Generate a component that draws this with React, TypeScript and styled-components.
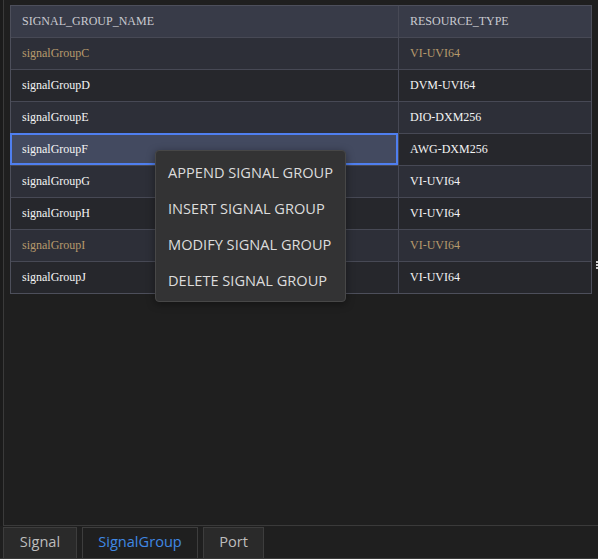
import React from "react";
import styled, { createGlobalStyle } from "styled-components";

const Global = createGlobalStyle`
  html, body { margin: 0; padding: 0; background: #1b1b1b; }
  body { width: 598px; height: 559px; overflow: hidden; }
  #root { width: 598px; height: 559px; }
`;

const Frame = styled.div`
  position: relative;
  width: 598px;
  height: 559px;
  display: flex;
  flex-direction: column;
  background: #1b1b1b;
`;

const Panel = styled.div`
  flex: 1;
  margin-left: 3px;
  border-left: 1px solid #3a3a3a;
  background: #1f1f1f;
  padding: 5px 0 0 6px;
  border-bottom: 1px solid #3a3a3a;
`;

const Table = styled.div`
  width: 582px;
  display: grid;
  grid-template-columns: 387px 193px;
  border: 1px solid #4d4f5b;
  box-sizing: border-box;
  font-family: "Liberation Serif", "Times New Roman", serif;
  font-size: 12px;
`;

type Tone = "head" | "odd" | "even" | "sel";

const bg: Record<Tone, string> = {
  head: "#383b48",
  odd: "#2d2f38",
  even: "#26272c",
  sel: "#434a60",
};

const Cell = styled.div<{ $tone: Tone; $warn?: boolean; $last?: boolean; $first?: boolean }>`
  height: ${(p) => (p.$first ? 31 : 32)}px;
  box-sizing: border-box;
  display: flex;
  align-items: center;
  padding-left: 11px;
  background: ${(p) => bg[p.$tone]};
  color: ${(p) => (p.$tone === "head" ? "#c9cad0" : p.$warn ? "#b79a6c" : "#f4f4f4")};
  border-top: ${(p) => (p.$first ? "none" : "1px solid #474955")};
  border-left: ${(p) => (p.$last ? "1px solid #474955" : "none")};
`;

const SelCell = styled.div`
  height: 32px;
  margin-left: -1px;
  box-sizing: border-box;
  display: flex;
  align-items: center;
  padding-left: 10px;
  background: #434a60;
  color: #f4f4f4;
  border: 2px solid #4f7ff0;
`;

const Menu = styled.div`
  position: absolute;
  left: 155px;
  top: 150px;
  width: 191px;
  box-sizing: border-box;
  padding: 3px 0;
  background: #333334;
  border: 1px solid #474747;
  border-radius: 4px;
  box-shadow: 0 2px 8px rgba(0, 0, 0, 0.4);
  display: flex;
  flex-direction: column;
`;

const MenuItem = styled.div`
  height: 36px;
  display: flex;
  align-items: center;
  padding-left: 12px;
  font-family: "Open Sans", "Noto Sans", sans-serif;
  font-size: 14.6px;
  color: #dcdcdc;
  white-space: nowrap;
`;

const TabBar = styled.div`
  height: 33px;
  display: flex;
  align-items: flex-start;
  gap: 5px;
  padding: 1px 0 0 3px;
  border-bottom: 1px solid #3a3a3a;
  box-sizing: border-box;
  background: #1f1f1f;
`;

const Tab = styled.div<{ $active?: boolean; $w: number }>`
  width: ${(p) => p.$w}px;
  height: 31px;
  box-sizing: border-box;
  display: flex;
  align-items: center;
  justify-content: center;
  padding-bottom: 4px;
  border: 1px solid #3d3d3d;
  border-bottom: none;
  background: ${(p) => (p.$active ? "#1f1f1f" : "#2a2a2a")};
  color: ${(p) => (p.$active ? "#3f88e4" : "#bdbdbd")};
  font-family: "Open Sans", "Noto Sans", sans-serif;
  font-size: 14.6px;
`;

const Grip = styled.div`
  position: absolute;
  right: 0;
  top: 261px;
  width: 2px;
  height: 8px;
  background: repeating-linear-gradient(#cfcfcf 0 2px, transparent 2px 3px);
`;

const rows: { name: string; type: string; warn?: boolean; sel?: boolean }[] = [
  { name: "signalGroupC", type: "VI-UVI64", warn: true },
  { name: "signalGroupD", type: "DVM-UVI64" },
  { name: "signalGroupE", type: "DIO-DXM256" },
  { name: "signalGroupF", type: "AWG-DXM256", sel: true },
  { name: "signalGroupG", type: "VI-UVI64" },
  { name: "signalGroupH", type: "VI-UVI64" },
  { name: "signalGroupI", type: "VI-UVI64", warn: true },
  { name: "signalGroupJ", type: "VI-UVI64" },
];

const tones: Tone[] = ["odd", "even", "odd", "sel", "odd", "even", "odd", "even"];

export default function App() {
  return (
    <Frame>
      <Global />
      <Panel>
        <Table>
          <Cell $tone="head" $first>SIGNAL_GROUP_NAME</Cell>
          <Cell $tone="head" $first $last>RESOURCE_TYPE</Cell>
          {rows.map((r, i) => (
            <React.Fragment key={r.name}>
              {r.sel ? (
                <SelCell>{r.name}</SelCell>
              ) : (
                <Cell $tone={tones[i]} $warn={r.warn}>{r.name}</Cell>
              )}
              <Cell $tone={r.sel ? "even" : tones[i]} $warn={r.warn} $last>
                {r.type}
              </Cell>
            </React.Fragment>
          ))}
        </Table>
      </Panel>
      <TabBar>
        <Tab $w={74}>Signal</Tab>
        <Tab $w={116} $active>SignalGroup</Tab>
        <Tab $w={61}>Port</Tab>
      </TabBar>
      <Menu>
        <MenuItem>APPEND SIGNAL GROUP</MenuItem>
        <MenuItem>INSERT SIGNAL GROUP</MenuItem>
        <MenuItem>MODIFY SIGNAL GROUP</MenuItem>
        <MenuItem>DELETE SIGNAL GROUP</MenuItem>
      </Menu>
      <Grip />
    </Frame>
  );
}
